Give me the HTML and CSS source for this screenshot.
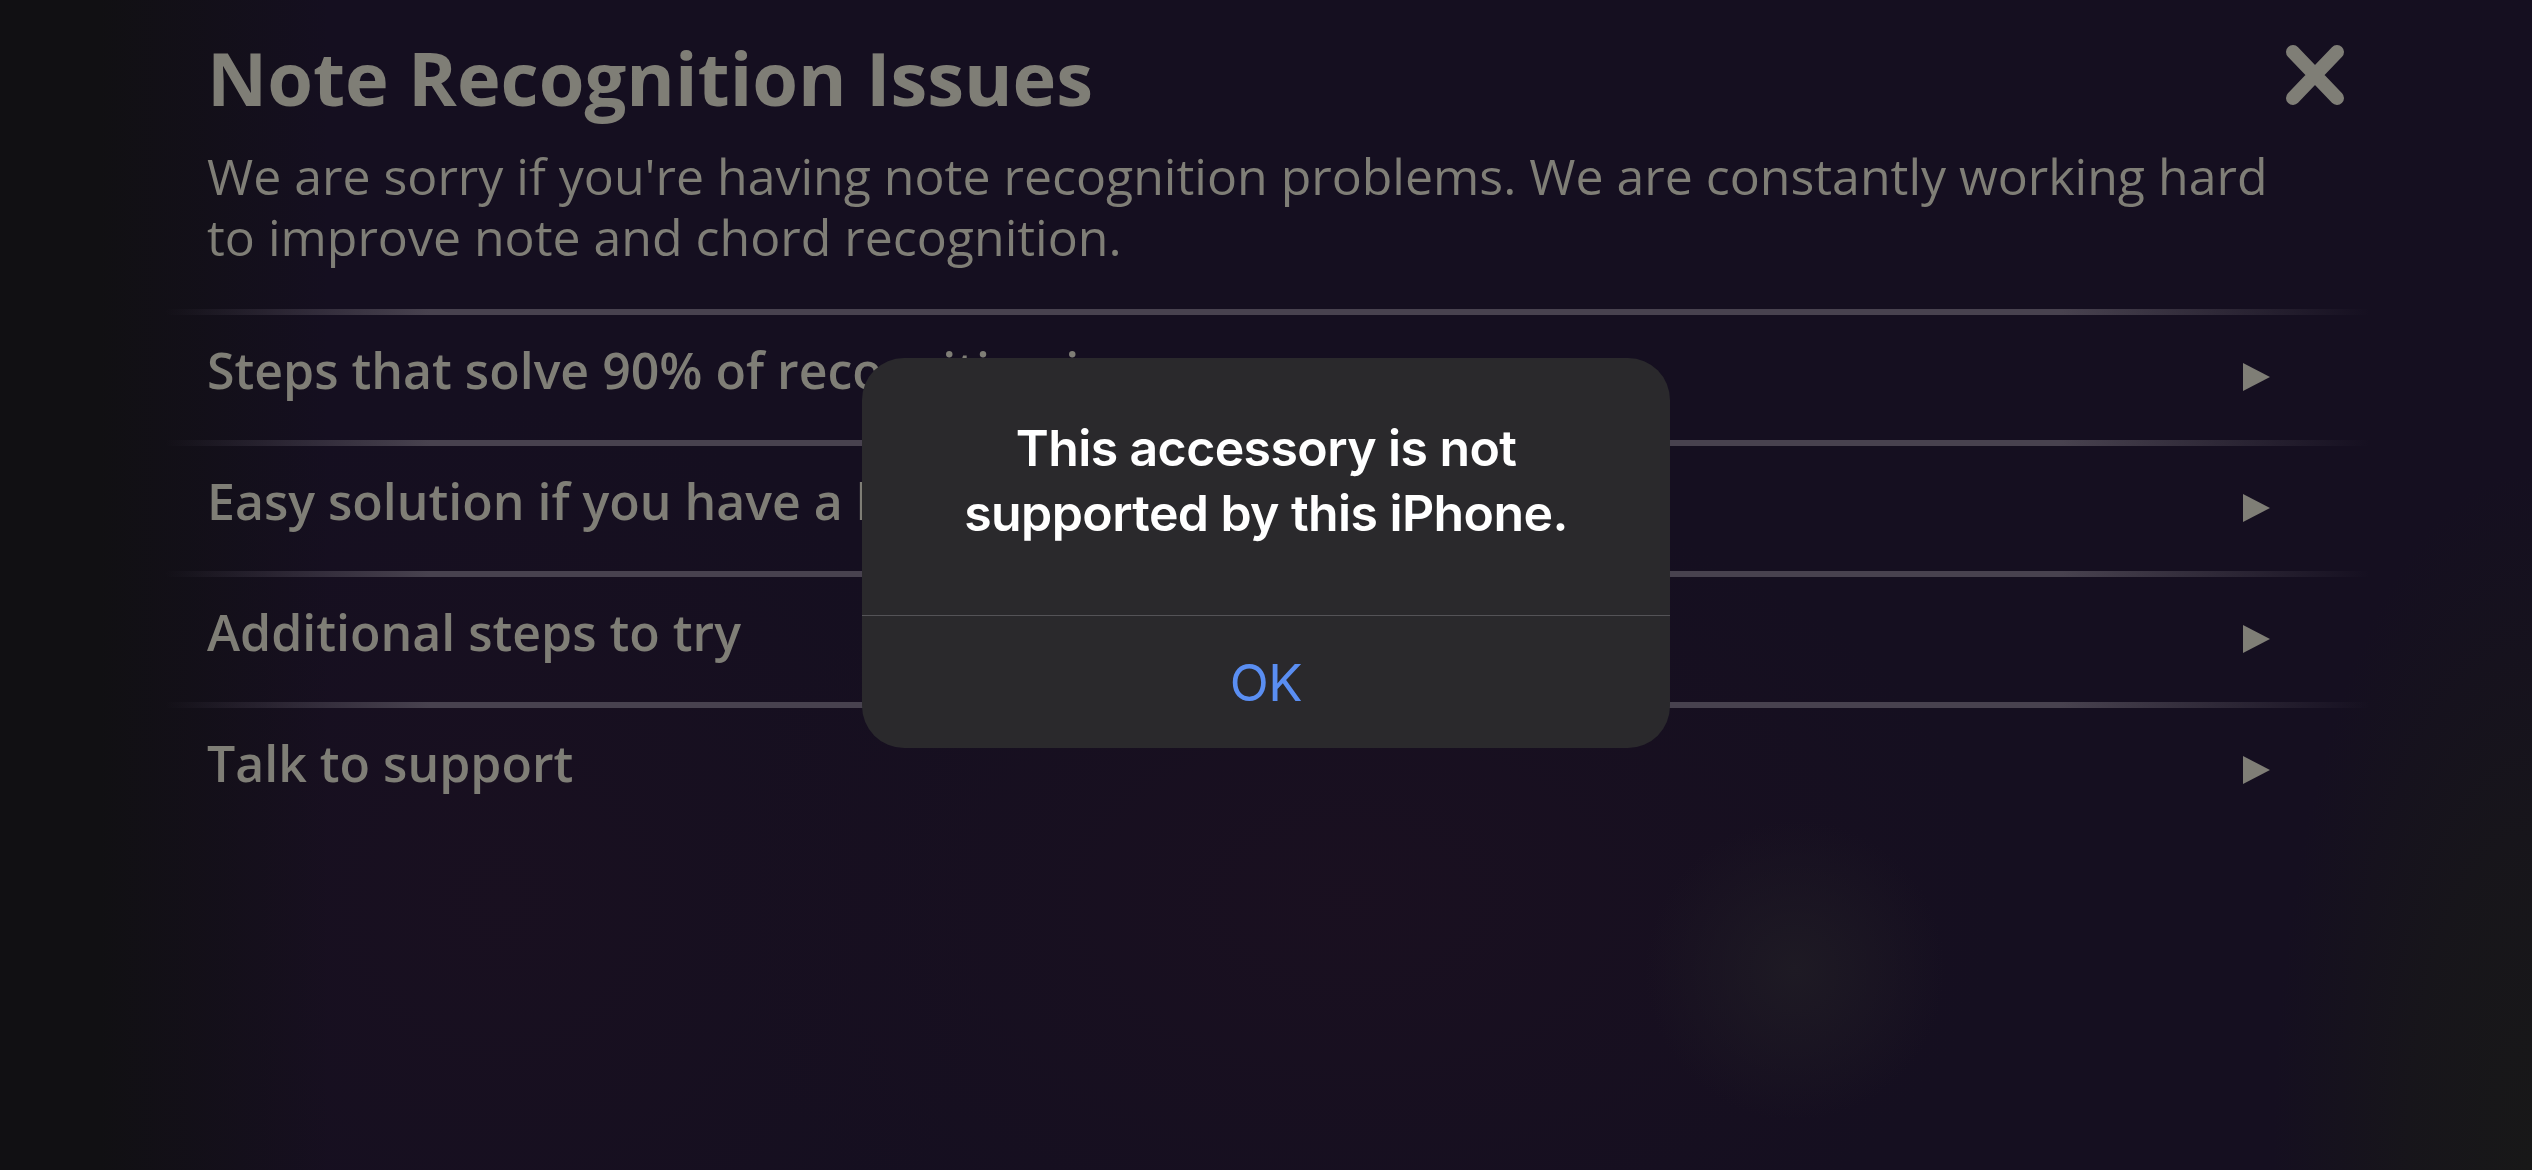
FILE: index.html
```html
<!DOCTYPE html>
<html lang="en">
<head>
<meta charset="utf-8">
<title>Note Recognition Issues</title>
<link rel="stylesheet" href="styles.css">
</head>
<body>
<div class="screen">
  <main class="sheet">
    <header class="header">
      <div class="title-row">
        <h1 class="title">Note Recognition Issues</h1>
        <button class="close" aria-label="Close">
          <svg viewBox="0 0 58 60" width="58" height="60">
            <path d="M7 7 L51 53 M51 7 L7 53" stroke="#7f7e76" stroke-width="14" stroke-linecap="round" fill="none"/>
          </svg>
        </button>
      </div>
      <p class="intro">We are sorry if you're having note recognition problems. We are constantly working hard to improve note and chord recognition.</p>
    </header>
    <ul class="list">
      <li class="row"><span class="row-label">Steps that solve 90% of recognition issues</span><span class="arrow"></span></li>
      <li class="row"><span class="row-label">Easy solution if you have a low-volume instrument</span><span class="arrow"></span></li>
      <li class="row"><span class="row-label">Additional steps to try</span><span class="arrow"></span></li>
      <li class="row"><span class="row-label">Talk to support</span><span class="arrow"></span></li>
    </ul>
  </main>

  <div class="alert" role="alertdialog">
    <div class="alert-body">
      <p class="alert-title">This accessory is not<br>supported by this iPhone.</p>
    </div>
    <button class="alert-button">OK</button>
  </div>
</div>
</body>
</html>
```

FILE: styles.css
```css
* { box-sizing: border-box; }

html, body {
  margin: 0;
  padding: 0;
}

body {
  width: 2532px;
  height: 1170px;
  overflow: hidden;
  background-color: #150f20;
  background-image:
    linear-gradient(90deg, #111013 0px, #111013 100px, rgba(18,16,22,0) 330px),
    radial-gradient(ellipse 260px 700px at 100% 100%, rgba(24,24,24,1) 0%, rgba(24,24,24,0.7) 45%, rgba(24,24,24,0) 100%),
    radial-gradient(circle 150px at 1795px 970px, #1e1a24 0%, rgba(30,26,36,0) 100%),
    radial-gradient(ellipse 650px 420px at 1350px 900px, rgba(27,16,32,0.8) 0%, rgba(27,16,32,0) 100%),
    radial-gradient(ellipse 500px 500px at 500px 900px, rgba(26,16,32,0.8) 0%, rgba(26,16,32,0) 100%);
  font-family: "Open Sans", "Noto Sans", sans-serif;
  color: #7f7e76;
}

.screen {
  position: relative;
  width: 2532px;
  height: 1170px;
}

.sheet {
  margin-left: 165px;
  width: 2205px;
}

.header {
  padding-top: 35px;
}

.title-row {
  display: flex;
  align-items: center;
  justify-content: space-between;
  padding-left: 42px;
  padding-right: 26px;
}

.title {
  margin: 0;
  font-size: 74px;
  line-height: 86px;
  font-weight: 700;
  letter-spacing: 0;
  color: #7f7e76;
}

.close {
  background: none;
  border: 0;
  padding: 0;
  margin: -6px 0 0 0;
  width: 58px;
  height: 60px;
  display: block;
}

.close svg { display: block; }

.intro {
  margin: 25px 0 0 0;
  padding-left: 42px;
  padding-right: 100px;
  font-size: 50px;
  line-height: 61px;
  font-weight: 400;
  color: #7f7e76;
}

.list {
  list-style: none;
  margin: 41px 0 0 0;
  padding: 0;
}

.row {
  position: relative;
  display: flex;
  align-items: center;
  justify-content: space-between;
  height: 131px;
  padding: 0 100px 10px 42px;
}

.row::before {
  content: "";
  position: absolute;
  left: 0;
  right: 0;
  top: 0;
  height: 6px;
  background: linear-gradient(90deg,
    rgba(72,66,79,0) 0%,
    rgba(72,66,79,1) 12%,
    rgba(72,66,79,1) 86%,
    rgba(72,66,79,0) 100%);
}

.row-label {
  font-size: 50px;
  font-weight: 600;
  line-height: 60px;
  color: #7f7e76;
  white-space: nowrap;
}

.arrow {
  width: 0;
  height: 0;
  border-top: 14px solid transparent;
  border-bottom: 14px solid transparent;
  border-left: 27px solid #7f7e76;
  margin-top: 14px;
}

/* iOS alert */
.alert {
  position: absolute;
  left: 862px;
  top: 358px;
  width: 808px;
  height: 390px;
  border-radius: 42px;
  background: #2a292c;
  overflow: hidden;
  display: flex;
  flex-direction: column;
}

.alert-body {
  height: 258px;
  padding-top: 58px;
  border-bottom: 1px solid #545357;
}

.alert-title {
  margin: 0;
  text-align: center;
  font-family: "Inter", "Roboto", sans-serif;
  font-weight: 600;
  font-size: 50px;
  line-height: 65px;
  letter-spacing: -0.6px;
  color: #ffffff;
}

.alert-button {
  flex: 1;
  background: none;
  border: 0;
  padding: 0;
  margin: 0;
  font-family: "Inter", "Roboto", sans-serif;
  font-weight: 400;
  font-size: 51px;
  letter-spacing: -0.5px;
  color: #5a8ef2;
}
```
